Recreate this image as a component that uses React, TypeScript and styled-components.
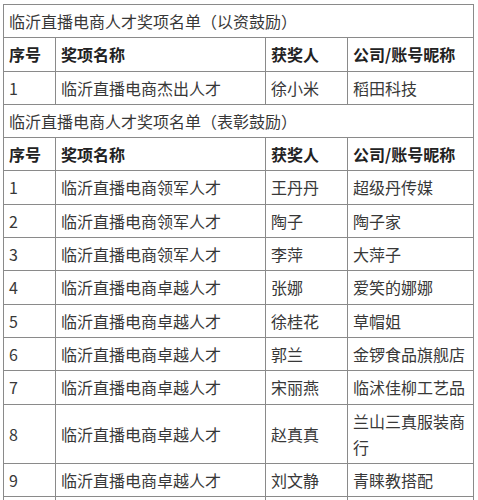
import { Fragment } from 'react';
import styled, { createGlobalStyle } from 'styled-components';

const GlobalStyle = createGlobalStyle`
    html, body {
        margin: 0;
        padding: 0;
        background: #ffffff;
    }
    body {
        font-family: "Noto Sans CJK SC", "Noto Sans", sans-serif;
        color: #333333;
    }
`;

const Page = styled.div`
    padding: 4px 0 0 3px;
`;

const Table = styled.table`
    width: 470px;
    table-layout: fixed;
    border-collapse: collapse;
    font-size: 16px;
`;

const Col = styled.col<{ w: number }>`
    width: ${props => props.w}px;
`;

const Cell = styled.td<{ bold?: boolean }>`
    border: 1px solid #8a8a8a;
    padding: 3px 4px 3px 5px;
    line-height: 26.3px;
    text-align: left;
    vertical-align: middle;
    font-weight: ${props => props.bold ? 700 : 400};
    color: ${props => props.bold ? '#222222' : '#383838'};
    word-break: break-all;
`;

type Row = [string, string, string, string];

const groups: { title: string, rows: Row[] }[] = [
    {
        title: '临沂直播电商人才奖项名单（以资鼓励）',
        rows: [
            ['1', '临沂直播电商杰出人才', '徐小米', '稻田科技'],
        ],
    },
    {
        title: '临沂直播电商人才奖项名单（表彰鼓励）',
        rows: [
            ['1', '临沂直播电商领军人才', '王丹丹', '超级丹传媒'],
            ['2', '临沂直播电商领军人才', '陶子', '陶子家'],
            ['3', '临沂直播电商领军人才', '李萍', '大萍子'],
            ['4', '临沂直播电商卓越人才', '张娜', '爱笑的娜娜'],
            ['5', '临沂直播电商卓越人才', '徐桂花', '草帽姐'],
            ['6', '临沂直播电商卓越人才', '郭兰', '金锣食品旗舰店'],
            ['7', '临沂直播电商卓越人才', '宋丽燕', '临沭佳柳工艺品'],
            ['8', '临沂直播电商卓越人才', '赵真真', '兰山三真服装商行'],
            ['9', '临沂直播电商卓越人才', '刘文静', '青睐教搭配'],
            ['', '', '', ''],
        ],
    },
];

const headers = ['序号', '奖项名称', '获奖人', '公司/账号昵称'];
const widths = [52, 210, 82, 126];

const App = () => {
    return (
        <Page>
            <GlobalStyle />
            <Table>
                <colgroup>
                    {widths.map((w, i) => <Col key={i} w={w} />)}
                </colgroup>
                <tbody>
                    {groups.map((group, gi) => (
                        <Fragment key={gi}>
                            <tr>
                                <Cell colSpan={4}>{group.title}</Cell>
                            </tr>
                            <tr>
                                {headers.map(h => <Cell key={h} bold>{h}</Cell>)}
                            </tr>
                            {group.rows.map((row, ri) => (
                                <tr key={ri}>
                                    {row.map((c, ci) => <Cell key={ci}>{c || '\u00a0'}</Cell>)}
                                </tr>
                            ))}
                        </Fragment>
                    ))}
                </tbody>
            </Table>
        </Page>
    )
}

export default App
